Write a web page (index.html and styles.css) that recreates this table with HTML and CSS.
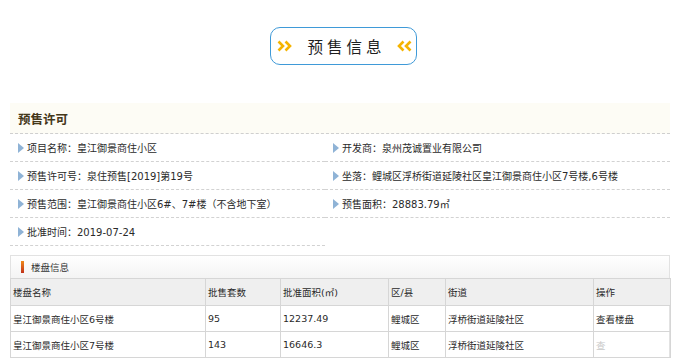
FILE: index.html
```html
<!DOCTYPE html>
<html lang="zh-CN">
<head>
<meta charset="utf-8">
<title>预售信息</title>
<link rel="stylesheet" href="styles.css">
</head>
<body>
<div class="banner">
  <div class="title-box">
    <svg class="chev" width="16" height="14" viewBox="0 0 16 14"><path d="M1.5 2.5 L6 7 L1.5 11.5 M8.5 2.5 L13 7 L8.5 11.5" fill="none" stroke="#f5b400" stroke-width="2.6" stroke-linejoin="miter"/></svg>
    <span class="title">预售信息</span>
    <svg class="chev" width="16" height="14" viewBox="0 0 16 14"><path d="M7.5 2.5 L3 7 L7.5 11.5 M14.5 2.5 L10 7 L14.5 11.5" fill="none" stroke="#f5b400" stroke-width="2.6" stroke-linejoin="miter"/></svg>
  </div>
</div>

<div class="section">
  <div class="sec-head">预售许可</div>
  <div class="info-grid">
    <div class="cell left"><i class="tri"></i>项目名称：皇江御景商住小区</div>
    <div class="cell right"><i class="tri"></i>开发商：泉州茂诚置业有限公司</div>
    <div class="cell left"><i class="tri"></i>预售许可号：泉住预售[2019]第19号</div>
    <div class="cell right"><i class="tri"></i>坐落：鲤城区浮桥街道延陵社区皇江御景商住小区7号楼,6号楼</div>
    <div class="cell left"><i class="tri"></i>预售范围：皇江御景商住小区6#、7#楼（不含地下室）</div>
    <div class="cell right"><i class="tri"></i>预售面积：28883.79㎡</div>
    <div class="cell left last"><i class="tri"></i>批准时间：2019-07-24</div>
  </div>

  <div class="table-box">
    <div class="tb-head"><span class="bar"></span>楼盘信息</div>
    <table class="lp">
      <colgroup>
        <col class="c1"><col class="c2"><col class="c3"><col class="c4"><col class="c5"><col class="c6">
      </colgroup>
      <tr class="th">
        <td>楼盘名称</td><td>批售套数</td><td>批准面积(㎡)</td><td>区/县</td><td>街道</td><td>操作</td>
      </tr>
      <tr>
        <td>皇江御景商住小区6号楼</td><td>95</td><td>12237.49</td><td>鲤城区</td><td>浮桥街道延陵社区</td><td>查看楼盘</td>
      </tr>
      <tr>
        <td>皇江御景商住小区7号楼</td><td>143</td><td>16646.3</td><td>鲤城区</td><td>浮桥街道延陵社区</td><td class="faded">查</td>
      </tr>
    </table>
  </div>
</div>
</body>
</html>
```

FILE: styles.css
```css
* { box-sizing: border-box; }
body {
  margin: 0;
  width: 678px;
  background: #fff;
  font-family: "DejaVu Sans", "Noto Sans CJK SC", sans-serif;
  color: #2b2b2b;
}
.banner {
  padding: 27px 0 0 270px;
  height: 103px;
}
.title-box {
  width: 147px;
  height: 38px;
  border: 1px solid #3f9ad8;
  border-radius: 10px;
  display: flex;
  align-items: center;
  justify-content: space-between;
  padding: 0 4px 0 6px;
}
.chev { display: block; }
.title {
  font-family: "Noto Sans CJK SC", sans-serif;
  font-size: 15.5px;
  letter-spacing: 4px;
  margin-left: 4px;
  color: #1e1e1e;
}
.section {
  margin-left: 10px;
  width: 660px;
}
.sec-head {
  height: 31px;
  background: #fdfcf5;
  border-bottom: 1px dashed #cfcfcf;
  padding-left: 8px;
  display: flex;
  align-items: center;
  font-family: "Noto Sans CJK SC", sans-serif;
  font-weight: bold;
  font-size: 12.5px;
  color: #45381a;
}
.info-grid {
  display: grid;
  grid-template-columns: 315px 345px;
}
.cell {
  height: 28px;
  border-bottom: 1px dashed #d2d2d2;
  display: flex;
  align-items: center;
  font-size: 10px;
  white-space: nowrap;
  color: #2a2a2a;
}
.cell.left { padding-left: 8px; }
.cell.right { padding-left: 8px; }
.tri {
  display: inline-block;
  width: 0;
  height: 0;
  border-top: 5px solid transparent;
  border-bottom: 5px solid transparent;
  border-left: 6px solid #8fb3d6;
  margin-right: 3px;
}
.table-box {
  margin-top: 9px;
  border: 1px solid #e2e2e2;
  border-bottom: none;
}
.tb-head {
  height: 22px;
  background: linear-gradient(#ffffff, #f4f4f4);
  display: flex;
  align-items: center;
  padding-left: 10px;
  font-family: "Noto Sans CJK SC", sans-serif;
  font-size: 9.5px;
  color: #333;
}
.bar {
  display: inline-block;
  width: 3px;
  height: 12px;
  background: linear-gradient(#f08a1a, #c0311a);
  margin-right: 7px;
}
.lp {
  width: 660px;
  border-collapse: collapse;
  table-layout: fixed;
  margin-left: -1px;
}
.c1 { width: 195px; }
.c2 { width: 75px; }
.c3 { width: 108px; }
.c4 { width: 57px; }
.c5 { width: 148px; }
.c6 { width: 77px; }
.lp td {
  height: 26px;
  border: 1.5px solid #d6d6d6;
  padding: 0 0 0 2px;
  font-size: 9.5px;
  color: #2a2a2a;
  white-space: nowrap;
  overflow: hidden;
}
.lp tr.th td {
  background: #efefef;
  height: 27px;
}
.lp td.faded { color: #c8c8c8; }
```
